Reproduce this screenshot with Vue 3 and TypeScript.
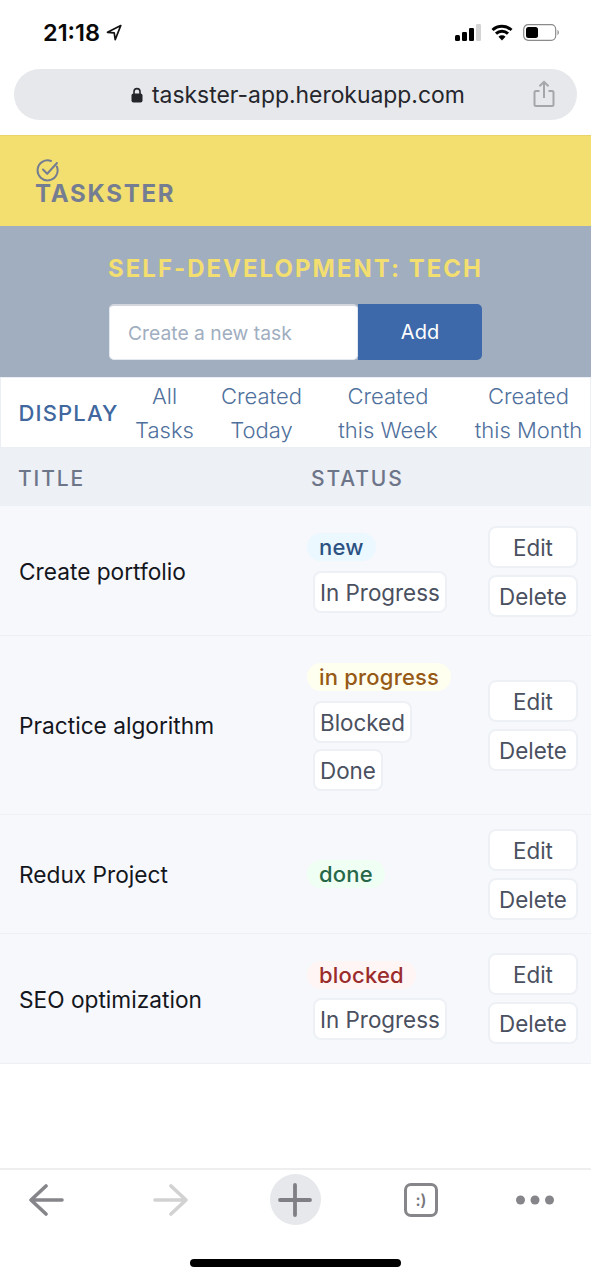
<script setup lang="ts">
interface Task {
  title: string
  status: string
  kind: string
  moves: string[]
}
const tasks: Task[] = [
  { title: 'Create portfolio', status: 'new', kind: 'new', moves: ['In Progress'] },
  { title: 'Practice algorithm', status: 'in progress', kind: 'progress', moves: ['Blocked', 'Done'] },
  { title: 'Redux Project', status: 'done', kind: 'done', moves: [] },
  { title: 'SEO optimization', status: 'blocked', kind: 'blocked', moves: ['In Progress'] },
]
const filters: [string, string, string][] = [
  ['All', 'Tasks', 'f-all'],
  ['Created', 'Today', 'f-today'],
  ['Created', 'this Week', 'f-week'],
  ['Created', 'this Month', 'f-month'],
]
</script>

<template>
  <div class="phone">
    <div class="status-bar">
      <div class="clock">
        <span>21:18</span>
        <svg width="16" height="17" viewBox="0 0 16 17"><path d="M14.800 1.500 1.500 8.300l6.700.5 1 6.800z" fill="none" stroke="#111" stroke-width="1.700" stroke-linejoin="round"/></svg>
      </div>
      <div class="indicators">
        <svg width="26" height="17" viewBox="0 0 26 17">
          <rect x="0" y="11" width="5" height="6" rx="1.500" fill="#000"/>
          <rect x="7" y="8" width="5" height="9" rx="1.200" fill="#000"/>
          <rect x="14" y="4" width="5" height="13" rx="1.200" fill="#000"/>
          <rect x="21" y="0" width="5" height="17" rx="1.200" fill="#d4d4d4"/>
        </svg>
        <svg width="22" height="17" viewBox="0 0 22 17">
          <path d="M1.500 6a13.800 13.800 0 0 1 19 0M5 9.700a8.800 8.800 0 0 1 12 0" fill="none" stroke="#000" stroke-width="3"/>
          <path d="M7.500 12.800a5 5 0 0 1 7 0L11 16.500z" fill="#000"/>
        </svg>
        <svg width="37" height="17" viewBox="0 0 37 17">
          <rect x=".7" y=".7" width="32" height="15.600" rx="4.500" fill="none" stroke="#8a8a8a" stroke-width="1.200"/>
          <rect x="3" y="3" width="12" height="11" rx="2.500" fill="#000"/>
          <path d="M34.500 6c1.800.6 1.800 4.400 0 5z" fill="#8a8a8a"/>
        </svg>
      </div>
    </div>

    <div class="url-wrap">
      <div class="url-bar">
        <div class="url">
          <svg width="12" height="16" viewBox="0 0 12 16"><path d="M3 7V4.600a3 3 0 0 1 6 0V7" fill="none" stroke="#24252b" stroke-width="1.600"/><rect x=".5" y="6.500" width="11" height="9" rx="2" fill="#24252b"/></svg>
          <span>taskster-app.herokuapp.com</span>
        </div>
        <svg class="share" width="22" height="28" viewBox="0 0 22 28">
          <path d="M6.500 11H3a1.500 1.500 0 0 0-1.500 1.500v12A1.500 1.500 0 0 0 3 26h16a1.500 1.500 0 0 0 1.500-1.500v-12A1.500 1.500 0 0 0 19 11h-3.500" fill="none" stroke="#a5a6aa" stroke-width="2"/>
          <path d="M11 18V2M6.500 6.300 11 1.800l4.500 4.500" fill="none" stroke="#a5a6aa" stroke-width="2"/>
        </svg>
      </div>
    </div>

    <header class="brand">
      <svg class="logo" width="24" height="24" viewBox="0 0 24 24">
        <path d="M20.800 8.500A10 10 0 1 1 15 3" fill="none" stroke="#747d92" stroke-width="2" stroke-linecap="round"/>
        <path d="m7 11.500 4.200 4.200L21 5" fill="none" stroke="#747d92" stroke-width="2" stroke-linecap="round" stroke-linejoin="round"/>
      </svg>
      <div class="brand-name">TASKSTER</div>
    </header>

    <section class="hero">
      <h1>SELF-DEVELOPMENT: TECH</h1>
      <form class="add-form" @submit.prevent>
        <input class="add-input" placeholder="Create a new task" />
        <button class="add-btn" type="submit">Add</button>
      </form>
    </section>

    <nav class="filters">
      <span class="display">DISPLAY</span>
      <a v-for="f in filters" :key="f[2]" :class="['filter', f[2]]">{{ f[0] }}<br />{{ f[1] }}</a>
    </nav>

    <div class="thead">
      <span>TITLE</span>
      <span>STATUS</span>
    </div>

    <div v-for="t in tasks" :key="t.title" class="row">
      <div class="title">{{ t.title }}</div>
      <div class="status">
        <span :class="['badge', t.kind]">{{ t.status }}</span>
        <button v-for="m in t.moves" :key="m" class="btn move">{{ m }}</button>
      </div>
      <div class="actions">
        <button class="btn">Edit</button>
        <button class="btn">Delete</button>
      </div>
    </div>

    <div class="spacer"></div>

    <footer class="toolbar">
      <div class="tools">
        <svg width="36" height="32" viewBox="0 0 36 32"><path d="M34 16H3M18 2 3 16l15 14" fill="none" stroke="#85858a" stroke-width="3.600" stroke-linecap="round" stroke-linejoin="round"/></svg>
        <svg width="36" height="32" viewBox="0 0 36 32"><path d="M2 16h31M18 2l15 14-15 14" fill="none" stroke="#d2d2d4" stroke-width="3.600" stroke-linecap="round" stroke-linejoin="round"/></svg>
        <div class="plus">
          <svg width="36" height="36" viewBox="0 0 36 36"><path d="M18 3v30M3 18h30" fill="none" stroke="#7f7f85" stroke-width="3.800" stroke-linecap="round"/></svg>
        </div>
        <div class="tabs"><span>:)</span></div>
        <svg width="38" height="10" viewBox="0 0 38 10"><circle cx="4.500" cy="5" r="4.500" fill="#85858a"/><circle cx="19" cy="5" r="4.500" fill="#85858a"/><circle cx="33.500" cy="5" r="4.500" fill="#85858a"/></svg>
      </div>
      <div class="home"></div>
    </footer>
  </div>
</template>

<style>
html, body { margin: 0; background: #fff; }
</style>

<style scoped>
.phone {
  width: 591px;
  height: 1280px;
  display: flex;
  flex-direction: column;
  font-family: Inter, "Liberation Sans", sans-serif;
  background: #fff;
  overflow: hidden;
}
.status-bar {
  height: 69px;
  box-sizing: border-box;
  padding: 19px 31px 0 43px;
  display: flex;
  justify-content: space-between;
  align-items: flex-start;
}
.clock {
  display: flex;
  align-items: center;
  gap: 6px;
  font-size: 23.500px;
  line-height: 27px;
  font-weight: 600;
  color: #0a0a0a;
}
.indicators {
  display: flex;
  align-items: center;
  gap: 10px;
  padding-top: 5px;
}
.url-wrap {
  height: 66px;
  padding: 0 14px;
}
.url-bar {
  height: 51px;
  border-radius: 26px;
  background: #e6e8ec;
  display: flex;
  align-items: center;
  padding: 0 22px 0 117px;
  justify-content: space-between;
}
.url {
  display: flex;
  align-items: center;
  gap: 9px;
  font-size: 22.900px;
  color: #25262b;
}
.share { margin-top: -2px; }
.brand {
  height: 91px;
  box-sizing: border-box;
  padding: 23px 0 0 36px;
  background: #f3de70;
  box-shadow: inset 0 1px 0 #e8d468;
}
.logo { display: block; }
.brand-name {
  margin-left: -1px;
  font-size: 24px;
  line-height: 24px;
  font-weight: 700;
  letter-spacing: 1.750px;
  color: #747d92;
}
.hero {
  height: 151px;
  box-sizing: border-box;
  padding-top: 29px;
  background: #a0aec0;
}
.hero h1 {
  margin: 0;
  text-align: center;
  font-size: 24px;
  line-height: 28px;
  font-weight: 700;
  letter-spacing: 2px;
  color: #f3de70;
}
.add-form {
  display: flex;
  width: 373px;
  height: 56px;
  margin: 21px 0 0 109px;
}
.add-input {
  width: 249px;
  box-sizing: border-box;
  padding: 0 18px;
  border: 1px solid #e2e8f0;
  border-top: 2px solid #d3d6dc;
  border-radius: 5px;
  background: #fff;
  font: 400 19.300px Inter, sans-serif;
  outline: none;
}
.add-input::placeholder { color: #a0aec0; opacity: 1; }
.add-btn {
  flex: 1;
  border: 0;
  border-radius: 0 5px 5px 0;
  background: #3d69ab;
  color: #fff;
  font: 400 20px Inter, sans-serif;
}
.filters {
  height: 71px;
  box-sizing: border-box;
  border: 1.500px solid #ebeff4;
  background: #fff;
  display: flex;
  align-items: center;
  padding-left: 17.500px;
  font-size: 22px;
  line-height: 34px;
  color: #4f709c;
}
.display {
  width: 115px;
  flex: none;
  font-weight: 500;
  letter-spacing: 1.150px;
  color: #40689e;
}
.filter { text-align: center; font-weight: 300; flex: none; }
.f-all { width: 62px; }
.f-today { width: 132px; }
.f-week { width: 121px; }
.f-month { width: 108px; margin-left: 26px; }
.thead {
  height: 58px;
  box-sizing: border-box;
  padding: 2px 0 0 18px;
  background: #edf0f5;
  display: grid;
  grid-template-columns: 293px 1fr;
  align-items: center;
  font-size: 21px;
  font-weight: 500;
  letter-spacing: 1.900px;
  color: #6d7589;
}
.row {
  display: grid;
  grid-template-columns: 288px 181px 90px;
  padding-left: 19px;
  align-items: center;
  background: #f7f8fb;
  border-bottom: 1px solid #edf0f5;
}
.title {
  padding-top: 2px;
  font-size: 22.700px;
  font-weight: 400;
  color: #14161d;
}
.status {
  padding: 27px 0 22.500px;
  display: flex;
  flex-direction: column;
  align-items: flex-start;
}
.badge {
  height: 28px;
  line-height: 28px;
  padding: 0 12px;
  border-radius: 14px;
  font-size: 22px;
  font-weight: 500;
  letter-spacing: .2px;
  margin-bottom: 3px;
}
.badge.new { background: #ebf8ff; color: #2c5282; }
.badge.progress { background: #fffff0; color: #975a16; }
.badge.done { background: #f0fff4; color: #276749; }
.badge.blocked { background: #fff5f5; color: #9b2c2c; }
.btn {
  height: 42px;
  box-sizing: border-box;
  padding: 1px 5px 0;
  border: 2px solid #edf0f5;
  border-radius: 8px;
  background: #fff;
  color: #4a5060;
  font: 400 22.400px Inter, sans-serif;
}
.move {
  margin: 6.500px 0 0 6px;
}
.actions {
  display: flex;
  flex-direction: column;
  gap: 7px;
  padding: 14px 0 13px;
}
.spacer { flex: 1; }
.toolbar {
  height: 112px;
  box-sizing: border-box;
  border-top: 2px solid #eeeeef;
}
.tools {
  display: grid;
  grid-template-columns: 92px 158px 90px 162px 66px;
  justify-items: center;
  align-items: center;
  height: 59px;
}
.plus {
  width: 51px;
  height: 51px;
  border-radius: 50%;
  background: #e6e8ec;
  display: flex;
  align-items: center;
  justify-content: center;
}
.tabs {
  width: 34px;
  height: 34px;
  box-sizing: border-box;
  border: 3.500px solid #85858a;
  border-radius: 7px;
  display: flex;
  align-items: center;
  justify-content: center;
  font-size: 16px;
  font-weight: 600;
  color: #77777c;
}
.home {
  width: 211px;
  height: 8px;
  margin: 30px auto 0;
  border-radius: 4px;
  background: #000;
}
</style>
